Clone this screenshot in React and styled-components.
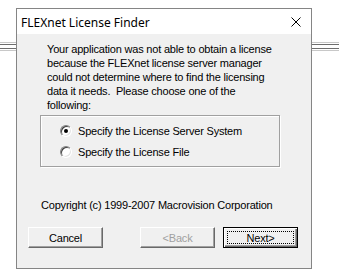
import styled, { createGlobalStyle } from "styled-components";

const Global = createGlobalStyle`
  html, body { margin: 0; padding: 0; background: #ffffff; }
  body { width: 339px; height: 273px; overflow: hidden; }
`;

const Desktop = styled.div`
  position: relative;
  width: 339px;
  height: 273px;
  background: #ffffff;
  overflow: hidden;
`;

const Rail = styled.div`
  position: absolute;
  left: 0;
  right: 0;
  top: 42px;
  height: 9px;
  border-top: 1px solid #c8c8c8;
  border-bottom: 1px solid #c8c8c8;
  box-sizing: border-box;
  &:before, &:after {
    content: "";
    position: absolute;
    left: 0;
    right: 0;
    height: 1px;
    background: #6e6e6e;
  }
  &:before { top: 1px; }
  &:after { bottom: 1px; }
`;

const Window = styled.div`
  position: absolute;
  left: 16px;
  top: 8px;
  width: 296px;
  height: 261px;
  box-sizing: border-box;
  border: 1px solid #858585;
  background: #f0f0f0;
  display: flex;
  flex-direction: column;
  font-family: "Liberation Sans", Arial, sans-serif;
  font-size: 11px;
  letter-spacing: -0.2px;
  color: #000;
`;

const TitleBar = styled.div`
  height: 25px;
  background: #ffffff;
  display: flex;
  align-items: center;
  justify-content: space-between;
  padding: 1px 10px 0 4px;
  box-sizing: border-box;
  font-family: "Noto Sans", "Open Sans", sans-serif;
  font-size: 12px;
  letter-spacing: 0;
  flex-shrink: 0;
`;

const Body = styled.div`
  flex: 1;
  display: flex;
  flex-direction: column;
  padding: 8px 0 0 23px;
`;

const Message = styled.p`
  margin: 0 0 3px 7px;
  line-height: 14px;
  white-space: nowrap;
`;

const GroupBox = styled.div`
  width: 240px;
  height: 52px;
  box-sizing: border-box;
  border: 1px solid #a0a0a0;
  box-shadow: inset 1px 1px 0 #ffffff, 1px 1px 0 #ffffff;
  display: flex;
  flex-direction: column;
  justify-content: center;
  gap: 8px;
  padding: 1px 0 0 19px;
`;

const RadioRow = styled.label`
  display: flex;
  align-items: center;
  gap: 6px;
  height: 13px;
`;

const Radio = styled.span`
  width: 12px;
  height: 12px;
  box-sizing: border-box;
  border-radius: 50%;
  border: 1px solid;
  border-color: #808080 #ffffff #ffffff #808080;
  box-shadow: inset 1px 1px 0 #404040, inset -1px -1px 0 #e3e3e3;
  background: #ffffff;
  display: flex;
  align-items: center;
  justify-content: center;
  &:after {
    content: "";
    width: 4px;
    height: 4px;
    border-radius: 50%;
    background: ${(p) => (p.$checked ? "#000" : "transparent")};
  }
`;

const Copyright = styled.div`
  margin: 31px 0 0 1px;
  line-height: 14px;
`;

const Buttons = styled.div`
  display: flex;
  margin: 15px 0 0 -12px;
`;

const Button = styled.div`
  width: 75px;
  height: 21px;
  box-sizing: border-box;
  margin-left: ${(p) => p.$gap || 0}px;
  background: #f0f0f0;
  border: 1px solid;
  border-color: ${(p) => (p.$default ? "#000" : "#ffffff #696969 #696969 #ffffff")};
  box-shadow: ${(p) =>
    p.$default
      ? "inset 1px 1px 0 #ffffff, inset -1px -1px 0 #696969, inset -2px -2px 0 #a0a0a0"
      : "inset -1px -1px 0 #a0a0a0"};
  color: ${(p) => (p.$disabled ? "#a0a0a0" : "#000")};
  display: flex;
  align-items: center;
  justify-content: center;
  padding: ${(p) => (p.$default ? "3px" : "0")};
`;

const Focus = styled.div`
  flex: 1;
  align-self: stretch;
  border: 1px dotted #000;
  display: flex;
  align-items: center;
  justify-content: center;
`;

export default function App() {
  return (
    <Desktop>
      <Global />
      <Rail />
      <Window>
        <TitleBar>
          <span>FLEXnet License Finder</span>
          <svg width="10" height="10" viewBox="0 0 10 10">
            <path d="M0.5 0.5 L9.5 9.5 M9.5 0.5 L0.5 9.5" stroke="#000" strokeWidth="1" />
          </svg>
        </TitleBar>
        <Body>
          <Message>
            Your application was not able to obtain a license
            <br />
            because the FLEXnet license server manager
            <br />
            could not determine where to find the licensing
            <br />
            data it needs.&nbsp; Please choose one of the
            <br />
            following:
          </Message>
          <GroupBox>
            <RadioRow>
              <Radio $checked />
              Specify the License Server System
            </RadioRow>
            <RadioRow>
              <Radio />
              Specify the License File
            </RadioRow>
          </GroupBox>
          <Copyright>Copyright (c) 1999-2007 Macrovision Corporation</Copyright>
          <Buttons>
            <Button>Cancel</Button>
            <Button $gap={37} $disabled>&lt;Back</Button>
            <Button $gap={8} $default>
              <Focus>Next&gt;</Focus>
            </Button>
          </Buttons>
        </Body>
      </Window>
    </Desktop>
  );
}
